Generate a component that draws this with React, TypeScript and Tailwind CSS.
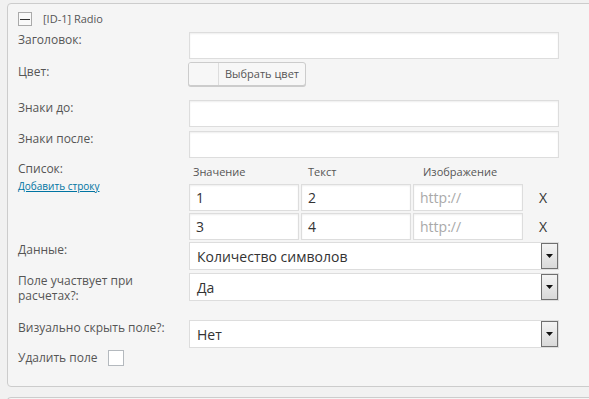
import React from "react";

const font = { fontFamily: '"Open Sans", "Liberation Sans", sans-serif' };

function TextInput({ value = "", placeholder = "", className = "" }: { value?: string; placeholder?: string; className?: string }) {
  return (
    <div
      className={`h-[27px] border border-[#dddddd] bg-white shadow-[inset_0_1px_2px_rgba(0,0,0,0.07)] flex items-center pl-[6px] text-[14px] ${className}`}
    >
      {value ? <span className="text-[#333]">{value}</span> : <span className="text-[#a9a9a9]">{placeholder}</span>}
    </div>
  );
}

function Select({ value }: { value: string }) {
  return (
    <div className="relative h-[28px] w-[370px] border border-[#dddddd] bg-white flex items-center pl-[7px] text-[14px] text-[#333]">
      {value}
      <div className="absolute right-0 top-0 bottom-0 w-[17px] border border-[#707070] bg-gradient-to-b from-[#f4f4f4] to-[#d9d9d9] flex items-center justify-center">
        <svg width="7" height="4" viewBox="0 0 7 4">
          <path d="M0 0h7L3.5 4z" fill="#111" />
        </svg>
      </div>
    </div>
  );
}

function Row({ label, children, className = "" }: { label: React.ReactNode; children: React.ReactNode; className?: string }) {
  return (
    <div className={`flex items-start ${className}`}>
      <div className="w-[171px] pr-[20px] text-[12px] leading-[15px] text-[#555]">{label}</div>
      <div>{children}</div>
    </div>
  );
}

export default function App() {
  return (
    <div className="w-[589px] h-[399px] overflow-hidden bg-[#f1f1f1]" style={font}>
      <div className="mt-[3px] ml-[7px] w-[640px] border border-[#cccccc] rounded-[4px] bg-[#f5f5f5] pl-[10px] pt-[8px] pb-[20px]">
        {/* header */}
        <div className="flex items-center h-[14px]">
          <div className="w-[14px] h-[14px] border border-[#aaaaaa] bg-[#f9f9f9] flex items-center justify-center">
            <div className="w-[10px] h-[1px] bg-[#333]" />
          </div>
          <span className="ml-[11px] text-[11px] text-[#555]">[ID-1] Radio</span>
        </div>

        <Row label="Заголовок:" className="mt-[6px]">
          <TextInput className="w-[370px]" />
        </Row>

        <Row label={<div className="pt-[2px]">Цвет:</div>} className="mt-[3px]">
          <div className="-ml-[1px] flex h-[24px] w-[118px] rounded-[3px] border border-[#cccccc] bg-[#f7f7f7] shadow-[0_1px_0_#cccccc] overflow-hidden">
            <div className="w-[30px] border-r border-[#dddddd] bg-[#f7f7f7]" />
            <div className="flex-1 flex items-center justify-center text-[11px] text-[#555]">Выбрать цвет</div>
          </div>
        </Row>

        <Row label="Знаки до:" className="mt-[14px]">
          <TextInput className="w-[370px]" />
        </Row>

        <Row label="Знаки после:" className="mt-[4px]">
          <TextInput className="w-[370px]" />
        </Row>

        <Row
          className="mt-[3px]"
          label={
            <div>
              <div className="leading-[16px]">Список:</div>
              <a className="block mt-[2px] text-[10px] leading-[14px] text-[#0074a2] underline">Добавить строку</a>
            </div>
          }
        >
          <div className="pt-[3px]">
            <div className="grid grid-cols-[110px_110px_110px] gap-x-[2px] h-[16px] text-[11px] leading-[16px] text-[#555]">
              <span className="pl-[4px]">Значение</span>
              <span className="pl-[7px]">Текст</span>
              <span className="pl-[10px]">Изображение</span>
            </div>
            <div className="mt-[4px] flex flex-col gap-[2px]">
              {[
                ["1", "2"],
                ["3", "4"],
              ].map(([a, b]) => (
                <div key={a} className="flex items-center gap-[2px]">
                  <TextInput value={a} className="w-[110px]" />
                  <TextInput value={b} className="w-[110px]" />
                  <TextInput placeholder="http://" className="w-[110px]" />
                  <span className="ml-[14px] text-[14px] text-[#333]">X</span>
                </div>
              ))}
            </div>
          </div>
        </Row>

        <Row label="Данные:" className="mt-[2px]">
          <Select value="Количество символов" />
        </Row>

        <Row label="Поле участвует при расчетах?:" className="mt-[3px]">
          <Select value="Да" />
        </Row>

        <Row label="Визуально скрыть поле?:" className="mt-[17px]">
          <Select value="Нет" />
        </Row>

        <div className="mt-[2px] flex items-center h-[16px]">
          <span className="text-[12px] text-[#555]">Удалить поле</span>
          <div className="ml-[10px] w-[16px] h-[16px] border border-[#b4b9be] bg-white" />
        </div>
      </div>
      <div className="mt-[10px] ml-[7px] w-[640px] h-[20px] border-t border-l border-[#cccccc] rounded-tl-[4px] bg-[#f5f5f5]" />
    </div>
  );
}
